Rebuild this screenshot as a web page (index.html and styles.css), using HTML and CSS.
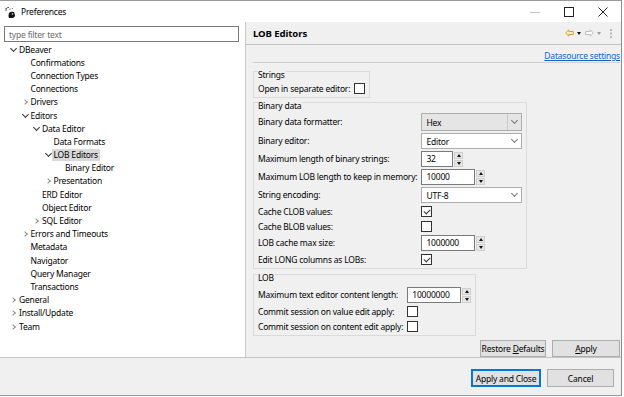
FILE: index.html
```html
<!DOCTYPE html>
<html>
    <head>
        <meta charset="utf-8">
        <title>Preferences</title>
        <link rel="stylesheet" href="styles.css">
    </head>
    <body>
        <div class="window">
            <div class="titlebar">
                <svg class="app-icon" width="12" height="13" viewBox="0 0 12 13">
                    <path d="M1 5 V2 M1 3 Q2 1 4 1.5" stroke="#555" stroke-width="1" fill="none"/>
                    <path d="M5 4 V2.5 M7 3 L8 2" stroke="#777" stroke-width="1" fill="none"/>
                    <path d="M4 7 Q6 5 9 6 L10 9 Q10 12 7 12 L4 12 Q3 10 4 7 Z" fill="#111"/>
                    <circle cx="7.5" cy="8" r="0.8" fill="#fff"/>
                </svg>
                <span class="title">Preferences</span>
                <div class="win-ctrl">
                    <svg width="12" height="12" viewBox="0 0 12 12"><path d="M1 6.5 H11" stroke="#c4c4c4"/></svg>
                    <svg width="12" height="12" viewBox="0 0 12 12"><rect x="1.5" y="1.5" width="9" height="9" fill="none" stroke="#222"/></svg>
                    <svg width="12" height="12" viewBox="0 0 12 12"><path d="M1.5 1.5 L10.5 10.5 M10.5 1.5 L1.5 10.5" stroke="#222"/></svg>
                </div>
            </div>
            <div class="main">
                <div class="nav">
                    <input class="filter" type="text" placeholder="type filter text">
                    <div class="tree">
                        <div class="node l0 open"><i></i><span>DBeaver</span></div>
                        <div class="node l1"><i></i><span>Confirmations</span></div>
                        <div class="node l1"><i></i><span>Connection Types</span></div>
                        <div class="node l1"><i></i><span>Connections</span></div>
                        <div class="node l1 shut"><i></i><span>Drivers</span></div>
                        <div class="node l1 open"><i></i><span>Editors</span></div>
                        <div class="node l2 open"><i></i><span>Data Editor</span></div>
                        <div class="node l3"><i></i><span>Data Formats</span></div>
                        <div class="node l3 open sel"><i></i><span>LOB Editors</span></div>
                        <div class="node l4"><i></i><span>Binary Editor</span></div>
                        <div class="node l3 shut"><i></i><span>Presentation</span></div>
                        <div class="node l2"><i></i><span>ERD Editor</span></div>
                        <div class="node l2"><i></i><span>Object Editor</span></div>
                        <div class="node l2 shut"><i></i><span>SQL Editor</span></div>
                        <div class="node l1 shut"><i></i><span>Errors and Timeouts</span></div>
                        <div class="node l1"><i></i><span>Metadata</span></div>
                        <div class="node l1"><i></i><span>Navigator</span></div>
                        <div class="node l1"><i></i><span>Query Manager</span></div>
                        <div class="node l1"><i></i><span>Transactions</span></div>
                        <div class="node l0 shut"><i></i><span>General</span></div>
                        <div class="node l0 shut"><i></i><span>Install/Update</span></div>
                        <div class="node l0 shut"><i></i><span>Team</span></div>
                    </div>
                </div>
                <div class="page">
                    <div class="page-head">
                        <h1>LOB Editors</h1>
                        <div class="tools">
                            <svg width="9" height="8" viewBox="0 0 9 8"><path d="M0.7 4 L3.7 0.8 V2.5 H8.3 V5.5 H3.7 V7.2 Z" fill="#fff3c0" stroke="#e0a020"/></svg>
                            <b class="tri"></b>
                            <svg width="9" height="8" viewBox="0 0 9 8"><path d="M8.3 4 L5.3 0.8 V2.5 H0.7 V5.5 H5.3 V7.2 Z" fill="#fff" stroke="#bdbdbd"/></svg>
                            <b class="tri off"></b>
                            <svg class="dots" width="4" height="11" viewBox="0 0 4 11"><path d="M2 1 V3 M2 4.5 V6.5 M2 8 V10" stroke="#aaa" stroke-width="1.6"/></svg>
                        </div>
                    </div>
                    <div class="link-row"><a href="#">Datasource settings</a></div>
                    <div class="rule"></div>

                    <div class="group">
                        <div class="cap">Strings</div>
                        <div class="grid">
                            <label>Open in separate editor:</label><span class="check"></span>
                        </div>
                    </div>

                    <div class="group">
                        <div class="cap">Binary data</div>
                        <div class="grid">
                            <label>Binary data formatter:</label>
                            <div class="combo ro"><span>Hex</span><em></em></div>
                            <label>Binary editor:</label>
                            <div class="combo"><span>Editor</span><em></em></div>
                            <label>Maximum length of binary strings:</label>
                            <div class="spin"><span class="box narrow">32</span><span class="arrows"><i class="up"></i><i class="dn"></i></span></div>
                            <label>Maximum LOB length to keep in memory:</label>
                            <div class="spin"><span class="box">10000</span><span class="arrows"><i class="up"></i><i class="dn"></i></span></div>
                            <label>String encoding:</label>
                            <div class="combo"><span>UTF-8</span><em></em></div>
                            <label>Cache CLOB values:</label><span class="check on"></span>
                            <label>Cache BLOB values:</label><span class="check"></span>
                            <label>LOB cache max size:</label>
                            <div class="spin"><span class="box">1000000</span><span class="arrows"><i class="up"></i><i class="dn"></i></span></div>
                            <label>Edit LONG columns as LOBs:</label><span class="check on"></span>
                        </div>
                    </div>

                    <div class="group lob">
                        <div class="cap">LOB</div>
                        <div class="grid">
                            <label>Maximum text editor content length:</label>
                            <div class="spin"><span class="box">10000000</span><span class="arrows"><i class="up"></i><i class="dn"></i></span></div>
                            <label>Commit session on value edit apply:</label><span class="check"></span>
                            <label>Commit session on content edit apply:</label><span class="check"></span>
                        </div>
                    </div>

                    <div class="page-buttons">
                        <button class="btn restore">Restore <u>D</u>efaults</button>
                        <button class="btn apply"><u>A</u>pply</button>
                    </div>
                </div>
            </div>
            <div class="dialog-buttons">
                <button class="btn default">Apply and Close</button>
                <button class="btn cancel">Cancel</button>
            </div>
        </div>
    </body>
</html>
```

FILE: styles.css
```css
*{margin:0;padding:0;box-sizing:border-box;}
html,body{height:100%;}
body{background:#fff;font-family:"Noto Sans","Open Sans",sans-serif;font-size:8.5px;letter-spacing:-0.2px;color:#000;}

.window{width:622px;height:396px;border-top:1px solid #9a9a9a;border-right:1px solid #8e8e8e;border-bottom:1px solid #8e99a8;display:flex;flex-direction:column;background:#f0f0f0;}

/* title bar */
.titlebar{height:21px;background:#fff;display:flex;align-items:center;padding-left:5px;}
.app-icon{margin-right:4px;margin-top:1px;}
.title{font-size:8.5px;}
.win-ctrl{margin-left:auto;display:flex;gap:22px;padding-right:12px;}

/* main split */
.main{height:336px;display:flex;border-bottom:1px solid #c4c4c4;}
.nav{width:246px;background:#fff;border-right:1px solid #c8c8c8;padding:4px 6px 0 4px;}
.filter{display:block;width:235px;height:16px;border:1px solid #7a7a7a;font-family:inherit;font-size:8.5px;letter-spacing:-0.2px;padding:0 4px;outline:none;}
.filter::placeholder{color:#6d6d6d;}
.tree{margin-top:1px;}
.node{height:13.2px;line-height:13.2px;display:flex;align-items:center;white-space:nowrap;}
.node i{width:11px;height:13px;flex:none;display:flex;align-items:center;justify-content:center;}
.node span{padding:0 2px;margin-left:-2px;line-height:12px;}
.node.sel span{background:#d9d9d9;}
.node.shut i:before{content:"";width:3px;height:3px;border:solid #8a8a8a;border-width:1px 1px 0 0;transform:rotate(45deg);margin-left:-1px;}
.node.open i:before{content:"";width:4px;height:4px;border:solid #333;border-width:0 1px 1px 0;transform:rotate(45deg);margin-top:-3px;}
.l0{padding-left:4px;}
.l1{padding-left:15.5px;}
.l2{padding-left:27px;}
.l3{padding-left:38.5px;}
.l4{padding-left:50px;}

/* preference page */
.page{flex:1;padding:0 0 0 7px;display:flex;flex-direction:column;align-items:flex-start;}
.page-head{align-self:stretch;margin-left:-7px;height:24px;border-bottom:1px solid #c2c2c2;display:flex;align-items:center;padding:0 8px 0 7px;}
.page-head h1{font-size:9.6px;font-weight:bold;letter-spacing:-0.1px;}
.tools{margin-left:auto;display:flex;align-items:center;gap:3px;}
.tri{width:0;height:0;border:2.5px solid transparent;border-top:3.5px solid #111;border-bottom:0;margin-right:1px;}
.tri.off{border-top-color:#9c9c9c;}
.dots{margin-left:4px;}
.link-row{align-self:stretch;text-align:right;padding:5px 1px 0 0;height:17px;}
.link-row a{color:#0a64c8;text-decoration:underline;}
.rule{align-self:stretch;height:1px;background:#cfcfcf;margin-right:1px;}

.group{border:1px solid #dadada;padding:0 4px 2px 4px;margin-top:8px;}
.group + .group{margin-top:4px;}
.group.lob{margin-top:5px;}
.cap{display:table;background:#f0f0f0;margin-top:-3px;line-height:11px;padding-right:1px;}
.grid{display:grid;grid-template-columns:auto auto;column-gap:4px;row-gap:2px;align-items:center;margin-top:2px;}
.group:first-of-type .grid{margin-top:0;}
.grid label{line-height:12px;white-space:nowrap;}
.group.lob .grid{margin-top:4px;row-gap:2px;}

.check{width:11px;height:11px;border:1px solid #333;background:#fff;display:block;margin:1px 0;}
.check.on:after{content:"";display:block;width:5px;height:3px;border:solid #333;border-width:0 0 1px 1px;transform:rotate(-45deg);margin:2px 0 0 2px;}

.combo{width:101px;height:16px;border:1px solid #adadad;background:#fff;display:flex;align-items:center;padding-left:4px;}
.combo.ro{background:#e5e5e5;height:18px;}
.combo em{margin-left:auto;width:14px;height:100%;display:flex;align-items:center;justify-content:center;}
.combo.ro em{border-left:1px solid #c9c9c9;}
.combo em:before{content:"";width:4px;height:4px;border:solid #777;border-width:0 1px 1px 0;transform:rotate(45deg);margin-top:-3px;}

.spin{display:flex;gap:1px;height:16px;}
.spin .box{width:54px;height:16px;border:1px solid #7a7a7a;background:#fff;padding-left:4px;line-height:14px;}
.spin .box.narrow{width:32px;}
.spin .arrows{width:9px;display:flex;flex-direction:column;gap:1px;padding-top:1px;}
.spin .arrows i{flex:1;background:#e6e6e6;border:1px solid #cfcfcf;display:flex;align-items:center;justify-content:center;}
.spin .up:before{content:"";border:2.5px solid transparent;border-bottom:3px solid #111;border-top:0;}
.spin .dn:before{content:"";border:2.5px solid transparent;border-top:3px solid #111;border-bottom:0;}

.btn{font-family:inherit;font-size:8.5px;letter-spacing:-0.2px;height:17px;background:#e1e1e1;border:1px solid #adadad;color:#000;white-space:nowrap;padding:0;}
.btn u{text-decoration:underline;}
.page-buttons{align-self:stretch;display:flex;justify-content:flex-end;gap:6px;margin-top:4px;padding-right:1px;}
.restore{width:66px;}
.apply{width:68px;}

.dialog-buttons{display:flex;justify-content:flex-end;gap:6px;padding:11px 7px 0 0;}
.default{width:70px;height:18px;border:1px solid #0078d7;box-shadow:inset 0 0 0 1px #0078d7;}
.cancel{width:67px;height:18px;}
```
